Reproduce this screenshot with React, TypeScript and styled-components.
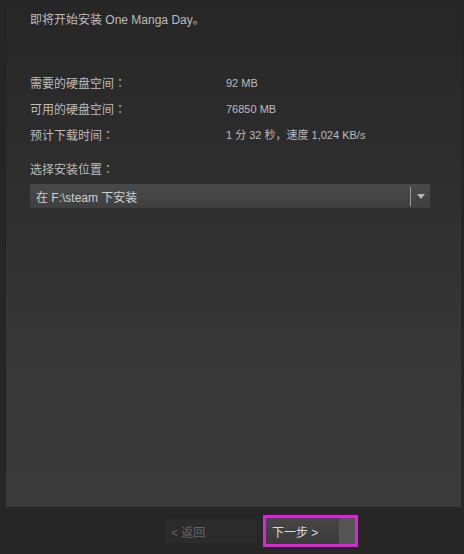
import styled, { createGlobalStyle } from 'styled-components'

const GlobalStyle = createGlobalStyle`
  html, body {
    margin: 0;
    padding: 0;
    background: #262626;
  }
  body {
    font-family: "Liberation Sans", "Noto Sans CJK SC", sans-serif;
    font-size: 12px;
    color: #bdbdbd;
  }
`

interface InfoRow {
  label: string
  value: string
}

const rows: InfoRow[] = [
  { label: '需要的硬盘空间', value: '92 MB' },
  { label: '可用的硬盘空间', value: '76850 MB' },
  { label: '预计下载时间', value: '1 分 32 秒，速度 1,024 KB/s' },
]

const App = () => {
  return (
    <Window>
      <GlobalStyle />
      <Panel>
        <Intro>即将开始安装 One Manga Day。</Intro>
        <InfoTable>
          {rows.map((row) => (
            <Row key={row.label}>
              <Label>
                {row.label}
                <Colon>：</Colon>
              </Label>
              <Value>{row.value}</Value>
            </Row>
          ))}
        </InfoTable>
        <SectionTitle>
          选择安装位置<Colon>：</Colon>
        </SectionTitle>
        <Select>
          <SelectText>在 F:\steam 下安装</SelectText>
          <Divider />
          <Arrow>
            <svg width="8" height="5" viewBox="0 0 8 5">
              <path d="M0 0H8L4 5Z" fill="#b8b8b8" />
            </svg>
          </Arrow>
        </Select>
      </Panel>
      <Footer>
        <BackButton>&lt; 返回</BackButton>
        <FocusRing>
          <NextButton>
            <NextLabel>下一步 &gt;</NextLabel>
            <NextEdge />
          </NextButton>
        </FocusRing>
      </Footer>
    </Window>
  )
}

const Window = styled.div`
  width: 464px;
  height: 554px;
  display: flex;
  flex-direction: column;
  background: #262626;
  overflow: hidden;
`

const Panel = styled.div`
  margin: 0 3px 0 5px;
  height: 507px;
  box-sizing: border-box;
  padding: 12px 24px 0 24px;
  background: linear-gradient(to bottom, #262626 0%, #2e2e2e 35%, #383838 75%, #3a3a3a 100%);
  border-left: 1px solid #232323;
  display: flex;
  flex-direction: column;
`

const Intro = styled.div`
  line-height: 16px;
`

const InfoTable = styled.div`
  margin-top: 47px;
  display: flex;
  flex-direction: column;
  gap: 10px;
`

const Row = styled.div`
  display: flex;
  height: 16px;
  line-height: 16px;
`

const Label = styled.div`
  width: 196px;
`

const Colon = styled.span`
  font-family: "Noto Sans CJK TC", sans-serif;
  line-height: 16px;
`

const Value = styled.div`
  font-size: 11px;
`

const SectionTitle = styled.div`
  margin-top: 18px;
  height: 16px;
  line-height: 16px;
`

const Select = styled.div`
  margin-top: 7px;
  width: 400px;
  height: 24px;
  display: flex;
  align-items: center;
  background: linear-gradient(to bottom, #4a4a4a, #3f3f3f);
`

const SelectText = styled.div`
  flex: 1;
  padding-left: 6px;
  color: #d0d0d0;
`

const Divider = styled.div`
  width: 1px;
  height: 19px;
  background: #9a9a9a;
`

const Arrow = styled.div`
  width: 19px;
  display: flex;
  justify-content: center;
  align-items: center;
`

const Footer = styled.div`
  flex: 1;
  display: flex;
  align-items: flex-start;
  padding: 8px 0 0 165px;
  gap: 6px;
`

const BackButton = styled.div`
  margin-top: 4px;
  width: 92px;
  height: 24px;
  box-sizing: border-box;
  padding-left: 6px;
  display: flex;
  align-items: center;
  background: #2b2b2b;
  color: #666;
`

const FocusRing = styled.div`
  border: 3px solid #e21ee2;
`

const NextButton = styled.div`
  width: 89px;
  height: 26px;
  display: flex;
  background: linear-gradient(to bottom, #474747, #3a3a3a);
`

const NextLabel = styled.div`
  flex: 1;
  padding-left: 6px;
  display: flex;
  align-items: center;
  color: #dcdcdc;
`

const NextEdge = styled.div`
  width: 16px;
  background: #555;
`

export default App
